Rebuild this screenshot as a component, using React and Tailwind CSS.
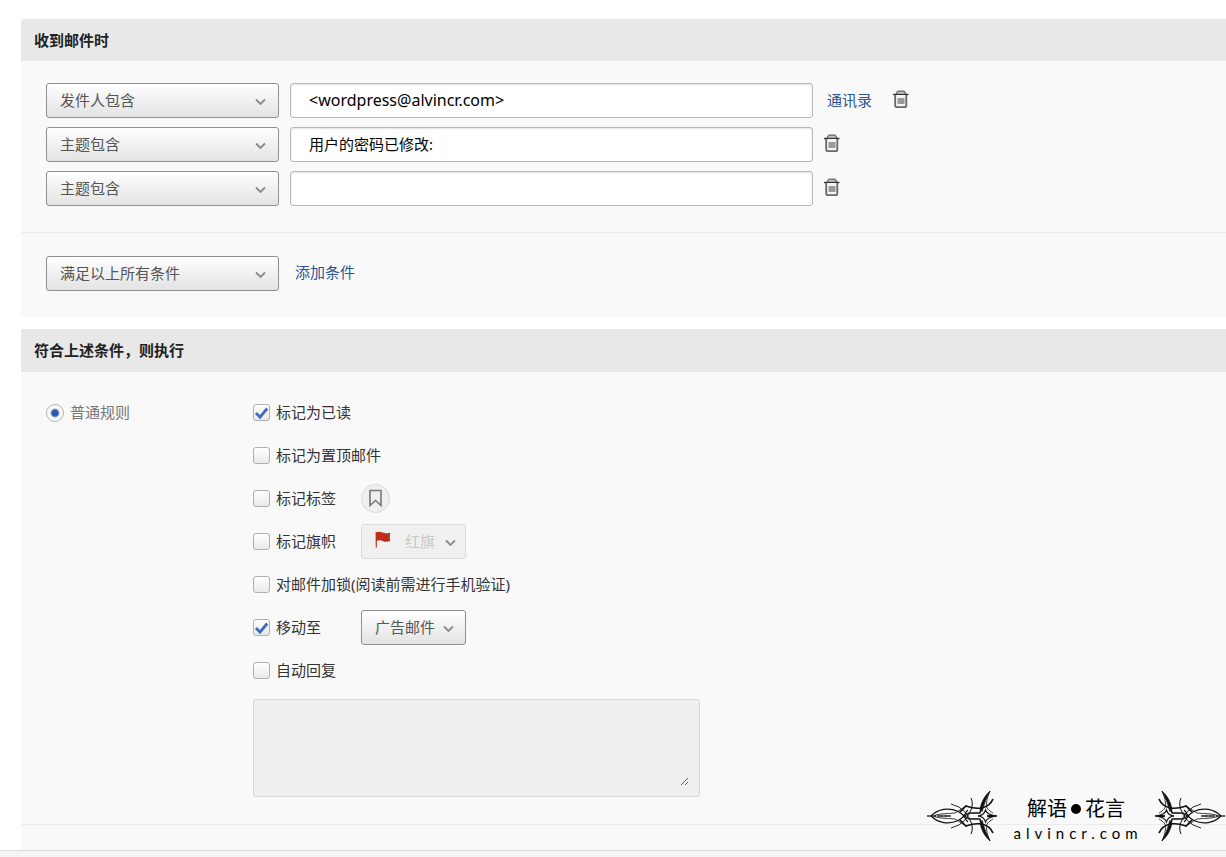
import { useState } from 'react';

function Chevron({ className = '' }) {
  return (
    <svg className={`pointer-events-none ${className}`} width="12" height="8" viewBox="0 0 12 8" fill="none" aria-hidden="true">
      <path d="M1 1.500 5.500 6l4.500-4.500" stroke="#8a8a8a" strokeWidth="1.800" />
    </svg>
  );
}

function TrashIcon() {
  return (
    <svg width="16" height="18" viewBox="0 0 16 18" fill="none" aria-hidden="true">
      <path d="M3.500 4V3L5 1.200h6L12.500 3v1" fill="#c4c4c4" stroke="#777" strokeWidth="1.400" />
      <path d="M0 4.500h15.500" stroke="#333" strokeWidth="1.400" />
      <path d="M2.200 5v10.500Q2.200 17.200 4 17.200h7.500q1.800 0 1.800-1.700V5" fill="#f4f4f4" stroke="#666" strokeWidth="1.800" />
      <path d="M4.500 8h7v6h-7z" fill="#999" />
    </svg>
  );
}

function FlagIcon({ className = '' }) {
  return (
    <svg className={className} width="16" height="17" viewBox="0 0 16 17" aria-hidden="true">
      <path d="M.5 1.500 2 1v15.500H.7z" fill="#c94a35" />
      <path d="M1 1.500c2.500-1.300 4.500-.8 6.500.1s4.500 1 8 .1c-.8 2-1 5.500-.3 8.300-3 1.300-5.200.8-7.400-.1S3.500 9 1 10.300z" fill="#bd2f1b" />
    </svg>
  );
}

/**
 * Drop-down with the grey gradient face.
 */
function Select({ label, options, className = '', pad = 'pl-[13px]', chevron = 'right-3', disabled = false, icon }) {
  const look = disabled
    ? 'border-[#dadada] bg-[#f0f0f0] text-[#c8c8c8]'
    : 'border-[#8f8f8f] bg-linear-to-b from-white to-[#e3e3e3] text-[#555]';
  return (
    <div className={`relative flex shrink-0 items-center ${className}`}>
      <select
        aria-label={label}
        disabled={disabled}
        className={`h-[35px] w-full appearance-none rounded-[3px] border pb-0.5 opacity-100 outline-none ${pad} ${look}`}
      >
        {options.map((option) => (
          <option key={option}>{option}</option>
        ))}
      </select>
      {icon}
      <Chevron className={`absolute top-[15px] ${chevron}`} />
    </div>
  );
}

function ConditionRow({ field, value, contacts, onChange, onRemove }) {
  return (
    <div className="flex items-center">
      <Select label="条件" options={[field]} className="w-[233px]" />
      <input
        type="text"
        aria-label={field}
        value={value}
        onChange={(e) => onChange(e.target.value)}
        className={`ml-[11px] h-[35px] w-[523px] rounded-[3px] border border-[#b8b8b8] bg-white px-[18px] pb-0.5 text-black shadow-[inset_0_1px_2px_rgba(0,0,0,0.12)] outline-none ${contacts ? 'text-[16px]' : 'text-[15px]'}`}
      />
      {contacts && (
        <a href="#contacts" className="mr-2.5 mb-0.5 ml-[14px] text-[#2d5595]">
          通讯录
        </a>
      )}
      <button type="button" aria-label="删除" onClick={onRemove} className="mb-1 ml-[11px] cursor-pointer">
        <TrashIcon />
      </button>
    </div>
  );
}

function CheckRow({ label, defaultChecked = false, children }) {
  return (
    <div className="flex h-[35px] items-center">
      <label className="flex min-w-[108px] items-center gap-1.5">
        <span className="relative flex">
          <input
            type="checkbox"
            defaultChecked={defaultChecked}
            className="peer size-[17px] appearance-none rounded-[3px] border border-[#b0b0b0] bg-linear-to-b from-white to-[#e9e9e9]"
          />
          <svg className="pointer-events-none absolute top-0 left-0 hidden peer-checked:block" width="17" height="17" viewBox="0 0 17 17" fill="none" aria-hidden="true">
            <path d="M3 9 7 13.200 14.200 4.500" stroke="#3d6cc0" strokeWidth="2.800" />
          </svg>
        </span>
        <span className="pb-0.5 whitespace-nowrap">{label}</span>
      </label>
      {children}
    </div>
  );
}

function PanelTitle({ children, className = 'h-[42px]' }) {
  return (
    <h2 className={`flex items-center rounded-tl-[3px] bg-[#e8e8e8] pl-[13px] font-bold text-[#222] ${className}`}>
      {children}
    </h2>
  );
}

/* Half of the ornament is drawn, the other half is its reflection */
function OrnamentHalf() {
  return (
    <>
      <path d="M0 25H9" strokeWidth=".8" />
      <path d="M4 25C11 18 22 16 31 20.500S37 28 41 31" strokeWidth="1.200" />
      <path d="M10 25Q16 23.500 24 25" strokeWidth=".8" />
      <path d="M7 24.500C16 22 20 23 28 22L39 15" strokeWidth=".8" />
      <path d="M24 13Q33 15 38 21L43 28" strokeWidth=".9" />
      <path d="M33 21 39 15Q47 18 55 17Q63 15 66 8" strokeWidth="1.700" />
      <path d="M36 26 42 22H53L54 16" strokeWidth="1.400" />
      <path d="M53 18Q55 7 63 0Q58 9 55 21" fill="#111" strokeWidth=".7" />
      <path d="M63 0Q58 11 60 17Q62 20 66 22" strokeWidth=".8" />
      <path d="M44 7Q47 14 43 21" strokeWidth="1" />
      <path d="M51 25Q57 24.500 58.500 19Q60 24 70 25L60 24.500" strokeWidth="1.100" />
    </>
  );
}

function Ornament({ className = '' }) {
  return (
    <svg className={className} width="70" height="50" viewBox="0 0 70 50" fill="none" stroke="#111" aria-hidden="true">
      <OrnamentHalf />
      <g transform="matrix(1 0 0 -1 0 50)">
        <OrnamentHalf />
      </g>
    </svg>
  );
}

function Watermark() {
  return (
    <div className="absolute right-px bottom-3 flex items-center text-black">
      <Ornament />
      <div className="flex w-[158px] flex-col items-center pt-2.5">
        <div className="flex items-center gap-1 text-[20px] leading-6">
          解语
          <span className="size-[10px] rounded-full bg-black" />
          花言
        </div>
        <div className="pl-1 font-['Lato'] text-[15px] leading-6 tracking-[5px]">alvincr.com</div>
      </div>
      <Ornament className="-scale-x-100" />
    </div>
  );
}

const initialConditions = [
  { id: 1, field: '发件人包含', value: '<wordpress@alvincr.com>', contacts: true },
  { id: 2, field: '主题包含', value: '用户的密码已修改:' },
  { id: 3, field: '主题包含', value: '' },
];

export default function App() {
  const [conditions, setConditions] = useState(initialConditions);

  const update = (id, value) => {
    setConditions(conditions.map((c) => (c.id === id ? { ...c, value } : c)));
  };

  return (
    <div className="relative flex min-h-screen flex-col overflow-hidden bg-white pt-[19px] font-['Noto_Sans','Noto_Sans_CJK_SC',sans-serif] text-[15px] leading-5 text-[#333]">
      {/* Conditions */}
      <section className="ml-[21px] rounded-l-[3px] bg-[#f9f9f9]">
        <PanelTitle>收到邮件时</PanelTitle>
        <div className="flex flex-col gap-[9px] border-b border-[#ebebeb] pt-[22px] pb-[26px] pl-[25px]">
          {conditions.map((c) => (
            <ConditionRow
              key={c.id}
              field={c.field}
              value={c.value}
              contacts={c.contacts}
              onChange={(value) => update(c.id, value)}
              onRemove={() => setConditions(conditions.filter((item) => item.id !== c.id))}
            />
          ))}
        </div>
        <div className="flex items-center pt-[23px] pb-[26px] pl-[25px]">
          <Select label="满足条件" options={['满足以上所有条件']} className="w-[233px]" />
          <button
            type="button"
            onClick={() => setConditions([...conditions, { id: Date.now(), field: '主题包含', value: '' }])}
            className="mb-1 ml-4 cursor-pointer text-[#2d5595]"
          >
            添加条件
          </button>
        </div>
      </section>

      {/* Actions */}
      <section className="mt-3 ml-[21px] grow rounded-tl-[3px] bg-[#f9f9f9]">
        <PanelTitle className="h-[43px] pb-px">符合上述条件，则执行</PanelTitle>
        <div className="flex border-b border-[#ebebeb] pt-[23px] pb-[27px] pl-[25px]">
          <label className="flex h-[35px] w-[207px] shrink-0 items-center gap-1.5 text-[#777]">
            <input
              type="radio"
              name="rule"
              defaultChecked
              className="size-[18px] appearance-none rounded-full border border-[#b5b5b5] bg-[radial-gradient(circle,#2c5cab_3px,#fafafa_5px)]"
            />
            <span className="pb-0.5">普通规则</span>
          </label>
          <div className="flex flex-col gap-2">
            <CheckRow label="标记为已读" defaultChecked />
            <CheckRow label="标记为置顶邮件" />
            <CheckRow label="标记标签">
              <button type="button" aria-label="标签" className="flex size-[29px] items-center justify-center rounded-full border border-[#d8d8d8] bg-[#efefef]">
                <svg width="15" height="19" viewBox="0 0 15 19" fill="none" aria-hidden="true">
                  <path d="M2 1.500h11v15L7.500 11.500 2 16.500z" stroke="#777" strokeWidth="1.600" />
                </svg>
              </button>
            </CheckRow>
            <CheckRow label="标记旗帜">
              <Select
                label="旗帜"
                options={['红旗']}
                disabled
                className="w-[105px]"
                pad="pl-[43px]"
                chevron="right-[9px]"
                icon={<FlagIcon className="pointer-events-none absolute top-[7px] left-[14px]" />}
              />
            </CheckRow>
            <CheckRow label="对邮件加锁(阅读前需进行手机验证)" />
            <CheckRow label="移动至" defaultChecked>
              <Select label="文件夹" options={['广告邮件']} className="w-[105px]" chevron="right-[11px]" />
            </CheckRow>
            <CheckRow label="自动回复" />
            <div className="mt-[3px] flex w-[447px] rounded-[3px] border border-[#d8d8d8] bg-[#efefef] p-2.5">
              <textarea aria-label="自动回复内容" disabled className="h-[76px] w-full resize outline-none" />
            </div>
          </div>
        </div>
      </section>

      <footer className="h-[7px] border-t border-[#dcdcdc] bg-[#f5f5f5]" />
      <Watermark />
    </div>
  );
}
